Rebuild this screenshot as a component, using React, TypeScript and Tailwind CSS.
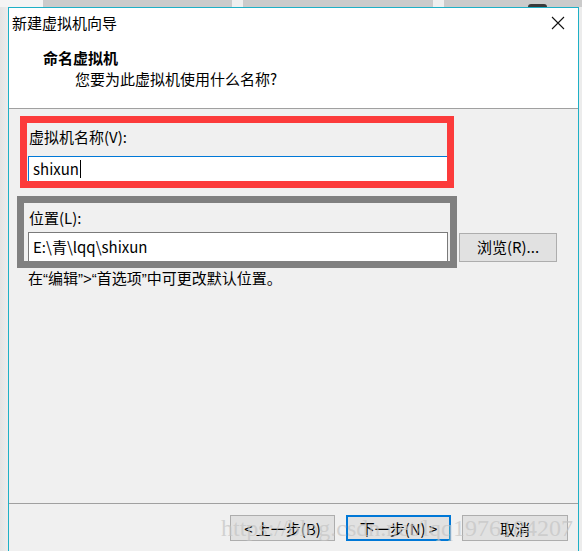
import React from "react";

const font = { fontFamily: '"Noto Sans CJK SC", "Noto Sans", sans-serif' };

export default function App() {
  return (
    <div
      className="relative w-[582px] h-[551px] overflow-hidden bg-[#ededed] text-black"
      style={font}
    >
      {/* top strip behind window */}
      <div className="flex h-[7px] w-full">
        <div className="w-[43px] bg-[#f4f4f4]" />
        <div className="w-[189px] bg-[#cbcbcb]" />
        <div className="w-[11px] bg-[#efefef]" />
        <div className="w-[190px] bg-[#cbcbcb]" />
        <div className="w-[11px] bg-[#efefef]" />
        <div className="relative w-[138px] bg-[#cbcbcb]">
          <div className="absolute left-[84px] top-[4px] h-[3px] w-[19px] rounded-t-full bg-[#3a3a3a]" />
        </div>
      </div>
      <div className="flex h-[544px]">
        <div className="w-[8px] bg-gradient-to-r from-[#e4e4e4] to-[#ececec]" />
        {/* window */}
        <div className="flex w-[571px] flex-col border-x border-t border-[#1eb0c6] bg-[#f0f0f0]">
          {/* header */}
          <div className="relative h-[101px] bg-white border-b border-[#a0a0a0]">
            <div className="pl-[3px] pt-[5px] text-[15px] leading-[20px]">新建虚拟机向导</div>
            <svg
              className="absolute right-[13px] top-[8px]"
              width="14"
              height="14"
              viewBox="0 0 14 14"
            >
              <path d="M1 1 L13 13 M13 1 L1 13" stroke="#111" strokeWidth="1.1" fill="none" />
            </svg>
            <div className="pl-[34px] pt-[15px] text-[15px] font-bold leading-[20px]">命名虚拟机</div>
            <div className="pl-[66px] pt-[1px] text-[15px] leading-[20px]">您要为此虚拟机使用什么名称?</div>
          </div>
          {/* body */}
          <div className="flex flex-1 flex-col">
            <div className="ml-[11px] mt-[7px] flex h-[72px] w-[434px] flex-col border-[7px] border-[#fc3b3b]">
              <div className="pl-[2px] pt-[3px] text-[15px] leading-[22px]">虚拟机名称(V):</div>
              <div className="mt-auto ml-[1px] flex h-[25px] items-center border-l border-t border-[#0078d7] bg-white pl-[4px] text-[15px]">
                <span>shixun</span>
                <span className="ml-[1px] h-[18px] w-px bg-black" />
              </div>
            </div>
            <div className="ml-[8px] mt-[8px] flex items-start">
              <div className="flex h-[72px] w-[440px] flex-col border-[7px] border-[#808080]">
                <div className="pl-[5px] pt-[4px] text-[15px] leading-[22px]">位置(L):</div>
                <div className="mt-auto ml-[4px] mr-[2px] flex h-[29px] items-center border-x border-t border-[#7a7a7a] bg-white pl-[4px] text-[15px]">
                  E:\青\lqq\shixun
                </div>
              </div>
              <button className="ml-[2px] mt-[37px] h-[29px] w-[98px] border border-[#adadad] bg-[#e1e1e1] text-[15px]">
                浏览(R)...
              </button>
            </div>
            <div
              className="ml-[19px] mt-[1px] text-[15px] leading-[20px]"
              style={{ fontFamily: '"Liberation Sans", "Noto Sans CJK SC", sans-serif' }}
            >
              在“编辑”&gt;“首选项”中可更改默认位置。
            </div>
            <div className="mt-auto border-t border-[#a0a0a0]" />
            <div className="relative flex h-[47px] justify-end gap-[11px] pr-[10px] pt-[11px]">
              <button className="h-[26px] w-[105px] border border-[#adadad] bg-[#e1e1e1] text-[15px] leading-none">
                &lt; 上一步(B)
              </button>
              <button className="h-[26px] w-[105px] border-2 border-[#0078d7] bg-[#e1e1e1] text-[15px] leading-none">
                下一步(N) &gt;
              </button>
              <button className="h-[26px] w-[106px] border border-[#adadad] bg-[#e1e1e1] text-[15px] leading-none">
                取消
              </button>
              <div
                className="pointer-events-none absolute left-[212px] top-[9px] whitespace-nowrap text-[24px] leading-[30px] text-[#c4c4c4]/70"
                style={{ fontFamily: '"Liberation Serif", serif' }}
              >
                https://blog.csdn.net/lqq1976184207
              </div>
            </div>
          </div>
        </div>
        <div className="w-[3px] bg-[#ececec]" />
      </div>
    </div>
  );
}
